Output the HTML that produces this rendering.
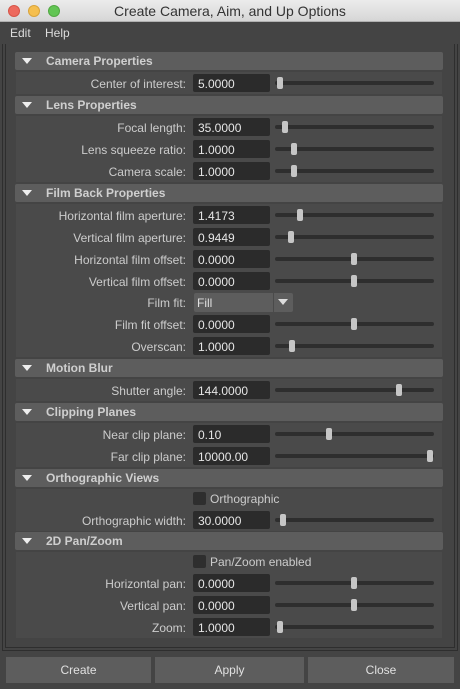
<!DOCTYPE html>
<html><head><style>
*{margin:0;padding:0;box-sizing:border-box}
body{width:460px;height:689px;background:#444;font-family:"Liberation Sans",sans-serif;font-size:12px;color:#ddd;position:relative;overflow:hidden}
.a{position:absolute}
.tb{left:0;top:0;width:460px;height:22px;background:linear-gradient(#ececec,#d6d6d6);border-bottom:1px solid #b0b0b0;color:#333;font-size:14px;text-align:center;line-height:22px}
.dot{top:5px;width:12px;height:12px;border-radius:50%}
.hd{left:15px;width:428px;height:18px;background:#5d5d5d;border-radius:2px;font-weight:bold;color:#cfcfcf;line-height:19px;padding-left:31px}
.hd:before{content:"";position:absolute;left:7px;top:6px;border-left:5px solid transparent;border-right:5px solid transparent;border-top:6px solid #eee}
.bd{left:16px;width:426px;background:#4a4a4a}
.lb{right:274px;text-align:right;color:#ccc;line-height:20px;white-space:nowrap}
.fd{left:193px;width:77px;height:18px;background:#2b2b2b;border-radius:2px;color:#e6e6e6;line-height:20px;padding-left:5px}
.tr{left:275px;width:159px;height:4px;background:#2e2e2e;border-radius:2px}
.th{width:6px;height:12px;background:#c6c6c6;border-radius:2px}
.cb{left:193px;width:13px;height:13px;background:#2e2e2e;border-radius:2px}
.bt{top:657px;height:26px;background:#5d5d5d;color:#e0e0e0;text-align:center;line-height:27px}
</style></head><body>
<div class="a tb">Create Camera, Aim, and Up Options</div>
<div class="a dot" style="left:8px;background:#ed6a5e;border:1px solid #d65548"></div>
<div class="a dot" style="left:28px;background:#f5bf4f;border:1px solid #d9a43c"></div>
<div class="a dot" style="left:48px;background:#62c554;border:1px solid #52a843"></div>
<div class="a" style="left:10px;top:26px;color:#ddd">Edit</div>
<div class="a" style="left:45px;top:26px;color:#ddd">Help</div>
<div class="a" style="left:2px;top:44px;width:456px;height:607px;border:1px solid #2e2e2e;border-top:none"></div>
<div class="a" style="left:5px;top:44px;width:450px;height:604px;border:1px solid #2e2e2e;border-top:none"></div>

<div class="a bd" style="top:72px;height:22px"></div>
<div class="a bd" style="top:116px;height:66px"></div>
<div class="a bd" style="top:204px;height:153px"></div>
<div class="a bd" style="top:379px;height:22px"></div>
<div class="a bd" style="top:423px;height:44px"></div>
<div class="a bd" style="top:489px;height:42px"></div>
<div class="a bd" style="top:552px;height:86px"></div>

<div class="a hd" style="top:52px">Camera Properties</div>
<div class="a hd" style="top:96px">Lens Properties</div>
<div class="a hd" style="top:184px">Film Back Properties</div>
<div class="a hd" style="top:359px">Motion Blur</div>
<div class="a hd" style="top:403px">Clipping Planes</div>
<div class="a hd" style="top:469px">Orthographic Views</div>
<div class="a hd" style="top:532px">2D Pan/Zoom</div>

<div class="a lb" style="top:74px">Center of interest:</div><div class="a fd" style="top:74px">5.0000</div><div class="a tr" style="top:81px"></div><div class="a th" style="left:277px;top:77px"></div>
<div class="a lb" style="top:118px">Focal length:</div><div class="a fd" style="top:118px">35.0000</div><div class="a tr" style="top:125px"></div><div class="a th" style="left:282px;top:121px"></div>
<div class="a lb" style="top:140px">Lens squeeze ratio:</div><div class="a fd" style="top:140px">1.0000</div><div class="a tr" style="top:147px"></div><div class="a th" style="left:291px;top:143px"></div>
<div class="a lb" style="top:162px">Camera scale:</div><div class="a fd" style="top:162px">1.0000</div><div class="a tr" style="top:169px"></div><div class="a th" style="left:291px;top:165px"></div>
<div class="a lb" style="top:206px">Horizontal film aperture:</div><div class="a fd" style="top:206px">1.4173</div><div class="a tr" style="top:213px"></div><div class="a th" style="left:297px;top:209px"></div>
<div class="a lb" style="top:228px">Vertical film aperture:</div><div class="a fd" style="top:228px">0.9449</div><div class="a tr" style="top:235px"></div><div class="a th" style="left:288px;top:231px"></div>
<div class="a lb" style="top:250px">Horizontal film offset:</div><div class="a fd" style="top:250px">0.0000</div><div class="a tr" style="top:257px"></div><div class="a th" style="left:351px;top:253px"></div>
<div class="a lb" style="top:272px">Vertical film offset:</div><div class="a fd" style="top:272px">0.0000</div><div class="a tr" style="top:279px"></div><div class="a th" style="left:351px;top:275px"></div>
<div class="a lb" style="top:293px">Film fit:</div>
<div class="a" style="left:194px;top:293px;width:99px;height:19px;background:#5d5d5d;border-radius:2px;line-height:20px;padding-left:3px;color:#e0e0e0">Fill</div>
<div class="a" style="left:273px;top:293px;width:1px;height:19px;background:#4a4a4a"></div>
<div class="a" style="left:278px;top:299px;border-left:5px solid transparent;border-right:5px solid transparent;border-top:6px solid #ddd"></div>
<div class="a lb" style="top:315px">Film fit offset:</div><div class="a fd" style="top:315px">0.0000</div><div class="a tr" style="top:322px"></div><div class="a th" style="left:351px;top:318px"></div>
<div class="a lb" style="top:337px">Overscan:</div><div class="a fd" style="top:337px">1.0000</div><div class="a tr" style="top:344px"></div><div class="a th" style="left:289px;top:340px"></div>
<div class="a lb" style="top:381px">Shutter angle:</div><div class="a fd" style="top:381px">144.0000</div><div class="a tr" style="top:388px"></div><div class="a th" style="left:396px;top:384px"></div>
<div class="a lb" style="top:425px">Near clip plane:</div><div class="a fd" style="top:425px">0.10</div><div class="a tr" style="top:432px"></div><div class="a th" style="left:326px;top:428px"></div>
<div class="a lb" style="top:447px">Far clip plane:</div><div class="a fd" style="top:447px">10000.00</div><div class="a tr" style="top:454px"></div><div class="a th" style="left:427px;top:450px"></div>
<div class="a cb" style="top:492px"></div><div class="a" style="left:210px;top:492px;color:#ccc">Orthographic</div>
<div class="a lb" style="top:511px">Orthographic width:</div><div class="a fd" style="top:511px">30.0000</div><div class="a tr" style="top:518px"></div><div class="a th" style="left:280px;top:514px"></div>
<div class="a cb" style="top:555px"></div><div class="a" style="left:210px;top:555px;color:#ccc">Pan/Zoom enabled</div>
<div class="a lb" style="top:574px">Horizontal pan:</div><div class="a fd" style="top:574px">0.0000</div><div class="a tr" style="top:581px"></div><div class="a th" style="left:351px;top:577px"></div>
<div class="a lb" style="top:596px">Vertical pan:</div><div class="a fd" style="top:596px">0.0000</div><div class="a tr" style="top:603px"></div><div class="a th" style="left:351px;top:599px"></div>
<div class="a lb" style="top:618px">Zoom:</div><div class="a fd" style="top:618px">1.0000</div><div class="a tr" style="top:625px"></div><div class="a th" style="left:277px;top:621px"></div>

<div class="a bt" style="left:6px;width:145px">Create</div>
<div class="a bt" style="left:155px;width:149px">Apply</div>
<div class="a bt" style="left:308px;width:146px">Close</div>
</body></html>
